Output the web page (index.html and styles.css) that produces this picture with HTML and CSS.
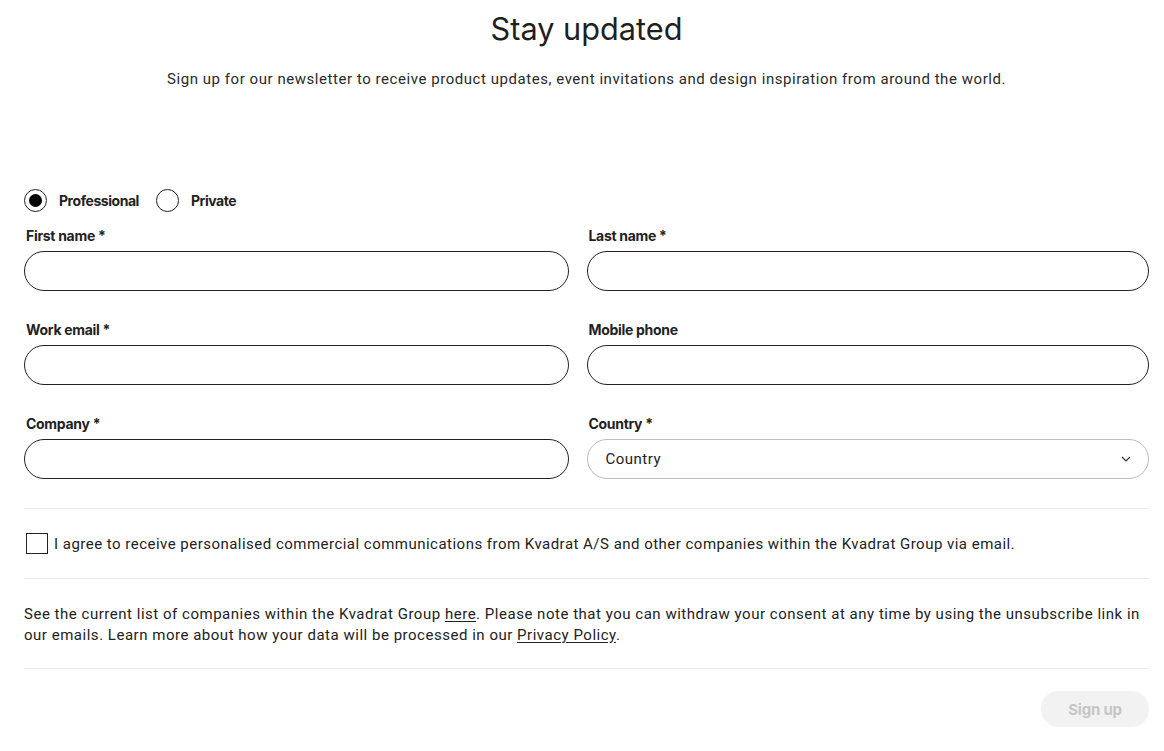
FILE: index.html
```html
<!DOCTYPE html>
<html lang="en">
<head>
<meta charset="utf-8">
<title>Stay updated</title>
<link rel="stylesheet" href="styles.css">
</head>
<body>
<main class="page">
  <header class="intro">
    <h1 class="title">Stay updated</h1>
    <p class="lead">Sign up for our newsletter to receive product updates, event invitations and design inspiration from around the world.</p>
  </header>

  <form class="form">
    <div class="radios">
      <label class="radio"><span class="radio-dot checked"></span>Professional</label>
      <label class="radio"><span class="radio-dot"></span>Private</label>
    </div>

    <div class="grid">
      <div class="field left">
        <label class="label">First name *</label>
        <div class="input"></div>
      </div>
      <div class="field">
        <label class="label">Last name *</label>
        <div class="input"></div>
      </div>
      <div class="field left">
        <label class="label">Work email *</label>
        <div class="input"></div>
      </div>
      <div class="field">
        <label class="label">Mobile phone</label>
        <div class="input"></div>
      </div>
      <div class="field left">
        <label class="label">Company *</label>
        <div class="input"></div>
      </div>
      <div class="field">
        <label class="label">Country *</label>
        <div class="input select">
          <span>Country</span>
          <svg class="chev" width="10" height="6" viewBox="0 0 10 6"><path d="M1 1l4 4 4-4" fill="none" stroke="#333" stroke-width="1.2"/></svg>
        </div>
      </div>
    </div>

    <div class="consent">
      <span class="checkbox"></span>
      <span>I agree to receive personalised commercial communications from Kvadrat A/S and other companies within the Kvadrat Group via email.</span>
    </div>

    <p class="note">See the current list of companies within the Kvadrat Group <a href="#">here</a>. Please note that you can withdraw your consent at any time by using the unsubscribe link in our emails. Learn more about how your data will be processed in our <a href="#">Privacy Policy</a>.</p>

    <div class="actions">
      <button type="button" class="submit">Sign up</button>
    </div>
  </form>
</main>
</body>
</html>
```

FILE: styles.css
```css
* { box-sizing: border-box; }

html, body {
  margin: 0;
  padding: 0;
  background: #fff;
}

body {
  font-family: Roboto, "Liberation Sans", sans-serif;
  color: #222;
}

.page {
  padding: 0 15px 0 24px;
}

.intro {
  text-align: center;
  padding-top: 9px;
}

.title {
  margin: 0;
  font-family: Inter, Roboto, sans-serif;
  font-weight: 400;
  font-size: 30.7px;
  line-height: 40px;
  color: #1f1f1f;
}

.lead {
  margin: 20px 0 0;
  font-size: 15px;
  line-height: 20px;
  letter-spacing: 0.55px;
  color: #2a2a2a;
}

.form {
  margin-top: 99px;
}

.radios {
  display: flex;
  align-items: center;
  gap: 17px;
  height: 24px;
}

.radio {
  display: flex;
  align-items: center;
  gap: 12px;
  font-family: Inter, Roboto, sans-serif;
  font-weight: 700;
  font-size: 14px;
  letter-spacing: -0.45px;
  color: #222;
}

.radio-dot {
  width: 23px;
  height: 23px;
  border: 1.5px solid #222;
  border-radius: 50%;
  display: flex;
  align-items: center;
  justify-content: center;
}

.radio-dot.checked::after {
  content: "";
  width: 13px;
  height: 13px;
  border-radius: 50%;
  background: #000;
}

.grid {
  margin-top: 14px;
  display: grid;
  grid-template-columns: 1fr 1fr;
  row-gap: 29px;
}

.field {
  display: flex;
  flex-direction: column;
  gap: 5px;
}

.field.left {
  padding-right: 18px;
}

.label {
  font-family: Inter, Roboto, sans-serif;
  font-weight: 700;
  font-size: 14px;
  line-height: 20px;
  letter-spacing: -0.3px;
  color: #222;
  padding-left: 2px;
}

.input {
  height: 40px;
  border: 1px solid #222;
  border-radius: 20px;
  background: #fff;
}

.select {
  border-color: #bdbdbd;
  display: flex;
  align-items: center;
  justify-content: space-between;
  padding: 0 17px 0 18px;
  font-size: 15px;
  letter-spacing: 0.5px;
  color: #222;
}

.chev {
  display: block;
}

.consent {
  margin-top: 29px;
  border-top: 1px solid #ececec;
  border-bottom: 1px solid #ececec;
  height: 71px;
  display: flex;
  align-items: center;
  gap: 6px;
  padding-left: 2px;
  font-size: 15px;
  letter-spacing: 0.48px;
  color: #222;
}

.checkbox {
  width: 22px;
  height: 21px;
  border: 1.5px solid #222;
  flex: none;
}

.note {
  margin: 0;
  padding: 25px 0 22px;
  border-bottom: 1px solid #ececec;
  font-size: 15px;
  line-height: 21px;
  letter-spacing: 0.52px;
  color: #222;
}

.note a {
  color: #222;
  text-decoration: underline;
  text-underline-offset: 2px;
}

.actions {
  display: flex;
  justify-content: flex-end;
  padding-top: 22px;
}

.submit {
  width: 108px;
  height: 36px;
  border: none;
  border-radius: 18px;
  background: #f2f2f2;
  color: #c6c6c6;
  font-family: Inter, Roboto, sans-serif;
  font-weight: 700;
  font-size: 15px;
  letter-spacing: -0.2px;
}
```
